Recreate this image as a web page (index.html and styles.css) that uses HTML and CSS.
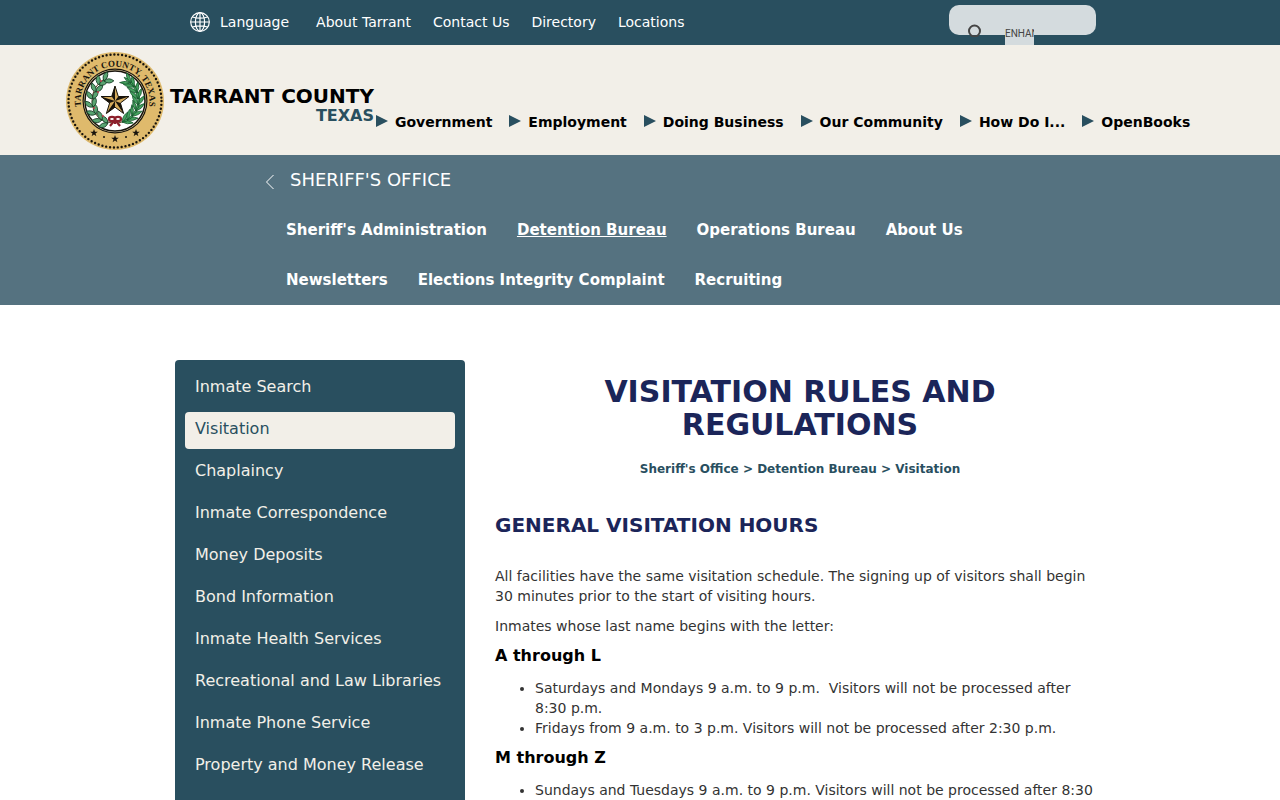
FILE: index.html
```html
<!DOCTYPE html>
<html lang="en">
<head>
    <meta charset="UTF-8">
    <meta name="viewport" content="width=device-width, initial-scale=1.0">
    <title>Visitation Rules and Regulations</title>
    <link rel="stylesheet" href="styles.css">
</head>
<body>
    <div class="topbar">
        <div class="topbar-inner">
            <a class="language" href="#">
                <svg class="globe" viewBox="0 0 20 20" width="20" height="20" aria-hidden="true">
                    <g fill="none" stroke="#fff" stroke-width="1.2">
                        <circle cx="10" cy="10" r="9.3"/>
                        <ellipse cx="10" cy="10" rx="4.6" ry="9.3"/>
                        <path d="M10 .7v18.6M.7 10h18.6M2.5 5q7.5 2.4 15 0M2.5 15q7.5-2.4 15 0"/>
                    </g>
                </svg>
                Language
            </a>
            <nav class="top-links">
                <a href="#">About Tarrant</a>
                <a href="#">Contact Us</a>
                <a href="#">Directory</a>
                <a href="#">Locations</a>
            </nav>
            <form class="search">
                <svg class="search-icon" viewBox="0 0 16 14" width="16" height="14" aria-hidden="true">
                    <circle cx="7.5" cy="8" r="5.5" fill="none" stroke="#444" stroke-width="2"/>
                </svg>
                <input class="search-box" type="text" aria-label="Search" placeholder="ENHANCED BY Google">
            </form>
        </div>
    </div>

    <header class="header">
        <div class="header-inner">
            <a class="brand" href="#">
                <svg class="seal" viewBox="0 0 100 100" width="100" height="100" role="img" aria-label="Tarrant County seal">
                    <defs>
                        <path id="seal-arc" d="M21 68.5A34.4 34.4 0 1 1 79 68.5"/>
                        <path id="small-star" d="M0-4L1-1.2H3.8L1.5.5 2.4 3.300 0 1.600-2.4 3.300-1.5.5-3.8-1.2H-1Z"/>
                        <g id="leaf-pair">
                            <path d="M0 0Q-7 0-7-7Q-1-6 0 0Z"/>
                            <path d="M0 0Q6-3 4-9Q-2-6 0 0Z"/>
                        </g>
                        <g id="long-leaves">
                            <path d="M0 0Q-6-3-7-9Q-1-6 0 0Z"/>
                            <path d="M0 0Q5-4 5-10Q-1-6 0 0Z"/>
                            <path d="M0 0Q-2-6 0-9Q2-5 0 0Z"/>
                        </g>
                    </defs>
                    <circle cx="50" cy="50" r="49" fill="#dfba6c"/>
                    <circle cx="50" cy="50" r="46.5" fill="none" stroke="#17130c" stroke-width="2.4" stroke-linecap="round" stroke-dasharray="0 3.895"/>
                    <circle cx="50" cy="50" r="32.5" fill="#17130c"/>
                    <circle cx="50" cy="50" r="31.3" fill="#efdcae"/>
                    <circle cx="50" cy="50" r="30" fill="#fff" stroke="#17130c" stroke-width="1.5"/>
                    <text class="seal-text"><textPath href="#seal-arc" startOffset="50%">TARRANT COUNTY, TEXAS</textPath></text>
                    <g fill="none" stroke="#5c4326" stroke-width="1">
                        <path d="M47 72Q28 70 27 50Q27 36 39 28"/>
                        <path d="M53 72Q72 70 74 50Q74 34 62 27"/>
                    </g>
                    <g fill="#5aa572" stroke="#173d25" stroke-width=".8">
                        <use href="#leaf-pair" transform="translate(43 72) rotate(-68)"/>
                        <use href="#leaf-pair" transform="translate(37 69) rotate(-48)"/>
                        <use href="#leaf-pair" transform="translate(31 63) rotate(-30)"/>
                        <use href="#leaf-pair" transform="translate(28 56) rotate(-10)"/>
                        <use href="#leaf-pair" transform="translate(28 48) rotate(5)"/>
                        <use href="#leaf-pair" transform="translate(31 41) rotate(20)"/>
                        <use href="#leaf-pair" transform="translate(34 34) rotate(40)"/>
                        <use href="#leaf-pair" transform="translate(39 30) rotate(65)"/>
                    </g>
                    <g fill="#45a35f" stroke="#14532b" stroke-width=".7">
                        <use href="#long-leaves" transform="translate(57 71) rotate(68)"/>
                        <use href="#long-leaves" transform="translate(62 69) rotate(54)"/>
                        <use href="#long-leaves" transform="translate(67 65) rotate(38)"/>
                        <use href="#long-leaves" transform="translate(71 60) rotate(22)"/>
                        <use href="#long-leaves" transform="translate(73 54) rotate(8)"/>
                        <use href="#long-leaves" transform="translate(73 48) rotate(-8)"/>
                        <use href="#long-leaves" transform="translate(72 42) rotate(-22)"/>
                        <use href="#long-leaves" transform="translate(69 36) rotate(-36)"/>
                        <use href="#long-leaves" transform="translate(66 32) rotate(-50)"/>
                    </g>
                    <g fill="#c0424c">
                        <circle cx="29" cy="57" r="1"/>
                        <circle cx="33" cy="41" r="1"/>
                        <circle cx="38" cy="65" r="1"/>
                        <circle cx="36" cy="30" r="1"/>
                    </g>
                    <path d="M50 35L53.3 45.5H64L55.4 52 58.6 62.5 50 56.2 41.4 62.5 44.6 52 36 45.5H46.7Z" fill="#d5ab5c" stroke="#17130c"/>
                    <path d="M50 35V50L46.7 45.5ZM64 45.5L50 50 53.3 45.5ZM58.6 62.5L50 50 55.4 52ZM41.4 62.5L50 50V56.2ZM36 45.5L50 50 44.6 52Z" fill="#17130c"/>
                    <g fill="none" stroke="#8c1f2b" stroke-width="2.200">
                        <ellipse cx="47" cy="68" rx="3" ry="2.200"/>
                        <ellipse cx="53" cy="68" rx="3" ry="2.200"/>
                        <path d="M49 70L45 75M51 70L55 75M50 67v6"/>
                    </g>
                    <g fill="#17130c">
                        <use href="#small-star" x="29" y="82"/>
                        <use href="#small-star" x="50" y="88"/>
                        <use href="#small-star" x="71" y="82"/>
                        <circle cx="39" cy="86" r="1"/>
                        <circle cx="61" cy="86" r="1"/>
                    </g>
                </svg>
                <span class="brand-name">
                    <span class="brand-county">TARRANT COUNTY</span>
                    <span class="brand-state">TEXAS</span>
                </span>
            </a>
            <nav class="main-nav">
                <a href="#">Government</a>
                <a href="#">Employment</a>
                <a href="#">Doing Business</a>
                <a href="#">Our Community</a>
                <a href="#">How Do I...</a>
                <a href="#">OpenBooks</a>
            </nav>
        </div>
    </header>

    <div class="department">
        <div class="department-inner">
            <a class="department-name" href="#">
                <svg class="back-icon" viewBox="0 0 10 16" width="10" height="16" aria-hidden="true">
                    <path d="M8.500 1L1.500 8l7 7" fill="none" stroke="#fff"/>
                </svg>
                SHERIFF'S OFFICE
            </a>
            <nav class="department-nav">
                <a href="#">Sheriff's Administration</a>
                <a class="current" href="#">Detention Bureau</a>
                <a href="#">Operations Bureau</a>
                <a href="#">About Us</a>
                <a href="#">Newsletters</a>
                <a href="#">Elections Integrity Complaint</a>
                <a href="#">Recruiting</a>
            </nav>
        </div>
    </div>

    <div class="container">
        <nav class="sidebar">
            <a href="#">Inmate Search</a>
            <a class="active" href="#">Visitation</a>
            <a href="#">Chaplaincy</a>
            <a href="#">Inmate Correspondence</a>
            <a href="#">Money Deposits</a>
            <a href="#">Bond Information</a>
            <a href="#">Inmate Health Services</a>
            <a href="#">Recreational and Law Libraries</a>
            <a href="#">Inmate Phone Service</a>
            <a href="#">Property and Money Release</a>
            <a href="#">Daily Booked In Report</a>
        </nav>
        <main class="content">
            <h1>VISITATION RULES AND REGULATIONS</h1>
            <div class="breadcrumb">
                <a href="#">Sheriff's Office</a> &gt; <a href="#">Detention Bureau</a> &gt; <a href="#">Visitation</a>
            </div>
            <h2>GENERAL VISITATION HOURS</h2>
            <p>All facilities have the same visitation schedule. The signing up of visitors shall begin 30 minutes prior to the start of visiting hours.</p>
            <p>Inmates whose last name begins with the letter:</p>
            <h3>A through L</h3>
            <ul>
                <li>Saturdays and Mondays 9 a.m. to 9 p.m.&nbsp; Visitors will not be processed after 8:30 p.m.</li>
                <li>Fridays from 9 a.m. to 3 p.m. Visitors will not be processed after 2:30 p.m.</li>
            </ul>
            <h3>M through Z</h3>
            <ul>
                <li>Sundays and Tuesdays 9 a.m. to 9 p.m. Visitors will not be processed after 8:30 p.m.</li>
            </ul>
        </main>
    </div>
</body>
</html>
```

FILE: styles.css
```css
* {
    box-sizing: border-box;
}
body {
    margin: 0;
    font-family: "DejaVu Sans", Verdana, sans-serif;
    font-size: 14px;
    line-height: 20px;
    color: #333;
    background-color: #fff;
}
a {
    color: inherit;
    text-decoration: none;
}
a:hover {
    text-decoration: underline;
}

/* Top bar */
.topbar {
    background-color: #294f5f;
    color: #fff;
}
.topbar-inner {
    display: flex;
    align-items: center;
    max-width: 930px;
    height: 45px;
    margin: 0 auto;
    padding: 0 9px 2px 15px;
}
.language {
    display: flex;
    align-items: center;
    gap: 10px;
}
.top-links {
    display: flex;
    gap: 22px;
    margin-left: 27px;
}
.search {
    display: flex;
    align-items: flex-start;
    gap: 22px;
    width: 147px;
    height: 30px;
    margin: 0 0 3px auto;
    padding: 18px 18px 0;
    border-radius: 10px;
    background-color: #d4dbde;
}
.search-icon {
    flex-shrink: 0;
}
.search-box {
    width: 29px;
    height: 22px;
    padding: 0 0 2px;
    border: 0;
    font-family: Roboto, sans-serif;
    font-size: 10px;
    color: #444;
    background-color: #d4dbde;
}
.search-box::placeholder {
    color: #444;
}

/* Header */
.header {
    background-color: #f2efe8;
}
.header-inner {
    display: flex;
    max-width: 1150px;
    height: 110px;
    margin: 0 auto;
}
.brand {
    display: flex;
    align-items: center;
    gap: 5px;
    padding-top: 2px;
    font-weight: bold;
}
.seal {
    flex-shrink: 0;
}
.seal-text {
    font-family: "Liberation Serif", serif;
    font-size: 9px;
    font-weight: bold;
    fill: #17130c;
    text-anchor: middle;
}
.brand-name {
    display: flex;
    flex-direction: column;
    align-items: flex-end;
    padding-top: 10px;
    white-space: nowrap;
}
.brand-county {
    font-size: 20px;
    color: #000;
}
.brand-state {
    font-size: 16px;
    color: #294f5f;
}
.main-nav {
    display: flex;
    align-items: flex-end;
    gap: 17px;
    padding: 0 0 23px 2px;
    font-weight: bold;
    color: #000;
    white-space: nowrap;
}
.main-nav a {
    display: flex;
    align-items: flex-start;
    gap: 7px;
}
.main-nav a::before {
    content: "";
    margin-top: 3px;
    border-style: solid;
    border-width: 6px 0 6px 12px;
    border-color: transparent transparent transparent #294f5f;
}

/* Department bar */
.department {
    background-color: #557280;
    color: #fff;
}
.department-inner {
    max-width: 750px;
    margin: 0 auto;
}
.department-name {
    display: flex;
    align-items: center;
    gap: 15px;
    height: 50px;
    font-size: 18px;
}
.back-icon {
    margin-top: 4px;
}
.department-nav {
    display: flex;
    flex-wrap: wrap;
    column-gap: 30px;
    padding-left: 21px;
    font-size: 15px;
    font-weight: bold;
    line-height: 50px;
}
.department-nav .current {
    text-decoration: underline;
}

/* Page */
.container {
    display: grid;
    grid-template-columns: 290px 1fr;
    align-items: start;
    gap: 30px;
    max-width: 930px;
    margin: 55px auto;
}
.sidebar {
    display: flex;
    flex-direction: column;
    gap: 5px;
    padding: 10px;
    border-radius: 4px;
    font-size: 16px;
    line-height: 19px;
    color: #f2efe8;
    background-color: #294f5f;
}
.sidebar a {
    padding: 7px 10px 11px;
    border-radius: 4px;
}
.sidebar .active {
    color: #294f5f;
    background-color: #f2efe8;
}
h1 {
    margin: 15px 0 18px;
    font-size: 30px;
    line-height: 33px;
    color: #1b2559;
    text-align: center;
}
.breadcrumb {
    font-size: 12px;
    font-weight: bold;
    color: #294f5f;
    text-align: center;
}
h2 {
    margin: 35px 0 30px;
    font-size: 20px;
    line-height: 22px;
    color: #1b2559;
}
h3 {
    margin: 10px 0 12px;
    font-size: 16px;
    line-height: 20px;
    color: #000;
}
p {
    margin: 0 0 10px;
}
ul {
    margin: 0 0 10px;
    padding-left: 40px;
}
```
